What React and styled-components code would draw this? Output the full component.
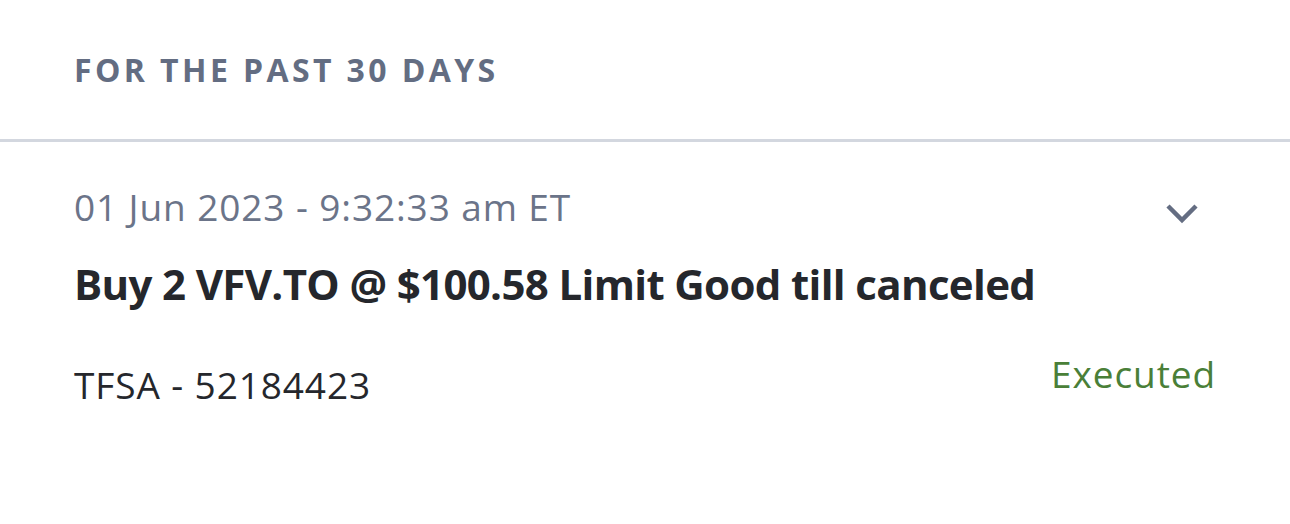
import React from "react";
import styled, { createGlobalStyle } from "styled-components";

const Global = createGlobalStyle`
  html, body { margin: 0; padding: 0; background: #ffffff; }
  body { font-family: "Open Sans", "Noto Sans", sans-serif; }
`;

const Page = styled.div`
  width: 1290px;
  height: 524px;
  background: #fff;
  display: flex;
  flex-direction: column;
`;

const SectionHeader = styled.div`
  padding: 50px 74px 0 74px;
  height: 142px;
  box-sizing: border-box;
  font-size: 32px;
  font-weight: 700;
  letter-spacing: 3.4px;
  color: #636d82;
  line-height: 40px;
  border-bottom: 3px solid #d3d7df;
`;

const Row = styled.div`
  padding: 0 74px;
  display: flex;
  flex-direction: column;
`;

const TopLine = styled.div`
  display: flex;
  justify-content: space-between;
  align-items: flex-start;
  margin-top: 40px;
`;

const BodyText = styled.div`
  font-size: 37px;
  letter-spacing: 0.9px;
  line-height: 50px;
  color: ${(p) => p.$color || "#25272c"};
`;

const Chevron = styled.svg`
  width: 36px;
  height: 24px;
  margin-top: 20px;
  margin-right: 16px;
  color: #646d82;
`;

const Title = styled.div`
  margin-top: 24px;
  font-size: 42px;
  font-weight: 700;
  letter-spacing: -0.65px;
  color: #25272c;
  line-height: 56px;
`;

const BottomLine = styled.div`
  display: flex;
  justify-content: space-between;
  align-items: flex-end;
  margin-top: 37px;
`;

const Status = styled(BodyText)`
  margin-bottom: 11px;
`;

export default function App() {
  return (
    <Page>
      <Global />
      <SectionHeader>FOR THE PAST 30 DAYS</SectionHeader>
      <Row>
        <TopLine>
          <BodyText $color="#6b7489">01 Jun 2023 - 9:32:33 am ET</BodyText>
          <Chevron viewBox="0 0 36 24" fill="none" stroke="currentColor" strokeWidth="4.5" strokeLinecap="butt" strokeLinejoin="miter">
            <path d="M4 4l14 14 14-14" />
          </Chevron>
        </TopLine>
        <Title>Buy 2 VFV.TO @ $100.58 Limit Good till canceled</Title>
        <BottomLine>
          <BodyText>TFSA - 52184423</BodyText>
          <Status $color="#4a7f38">Executed</Status>
        </BottomLine>
      </Row>
    </Page>
  );
}
